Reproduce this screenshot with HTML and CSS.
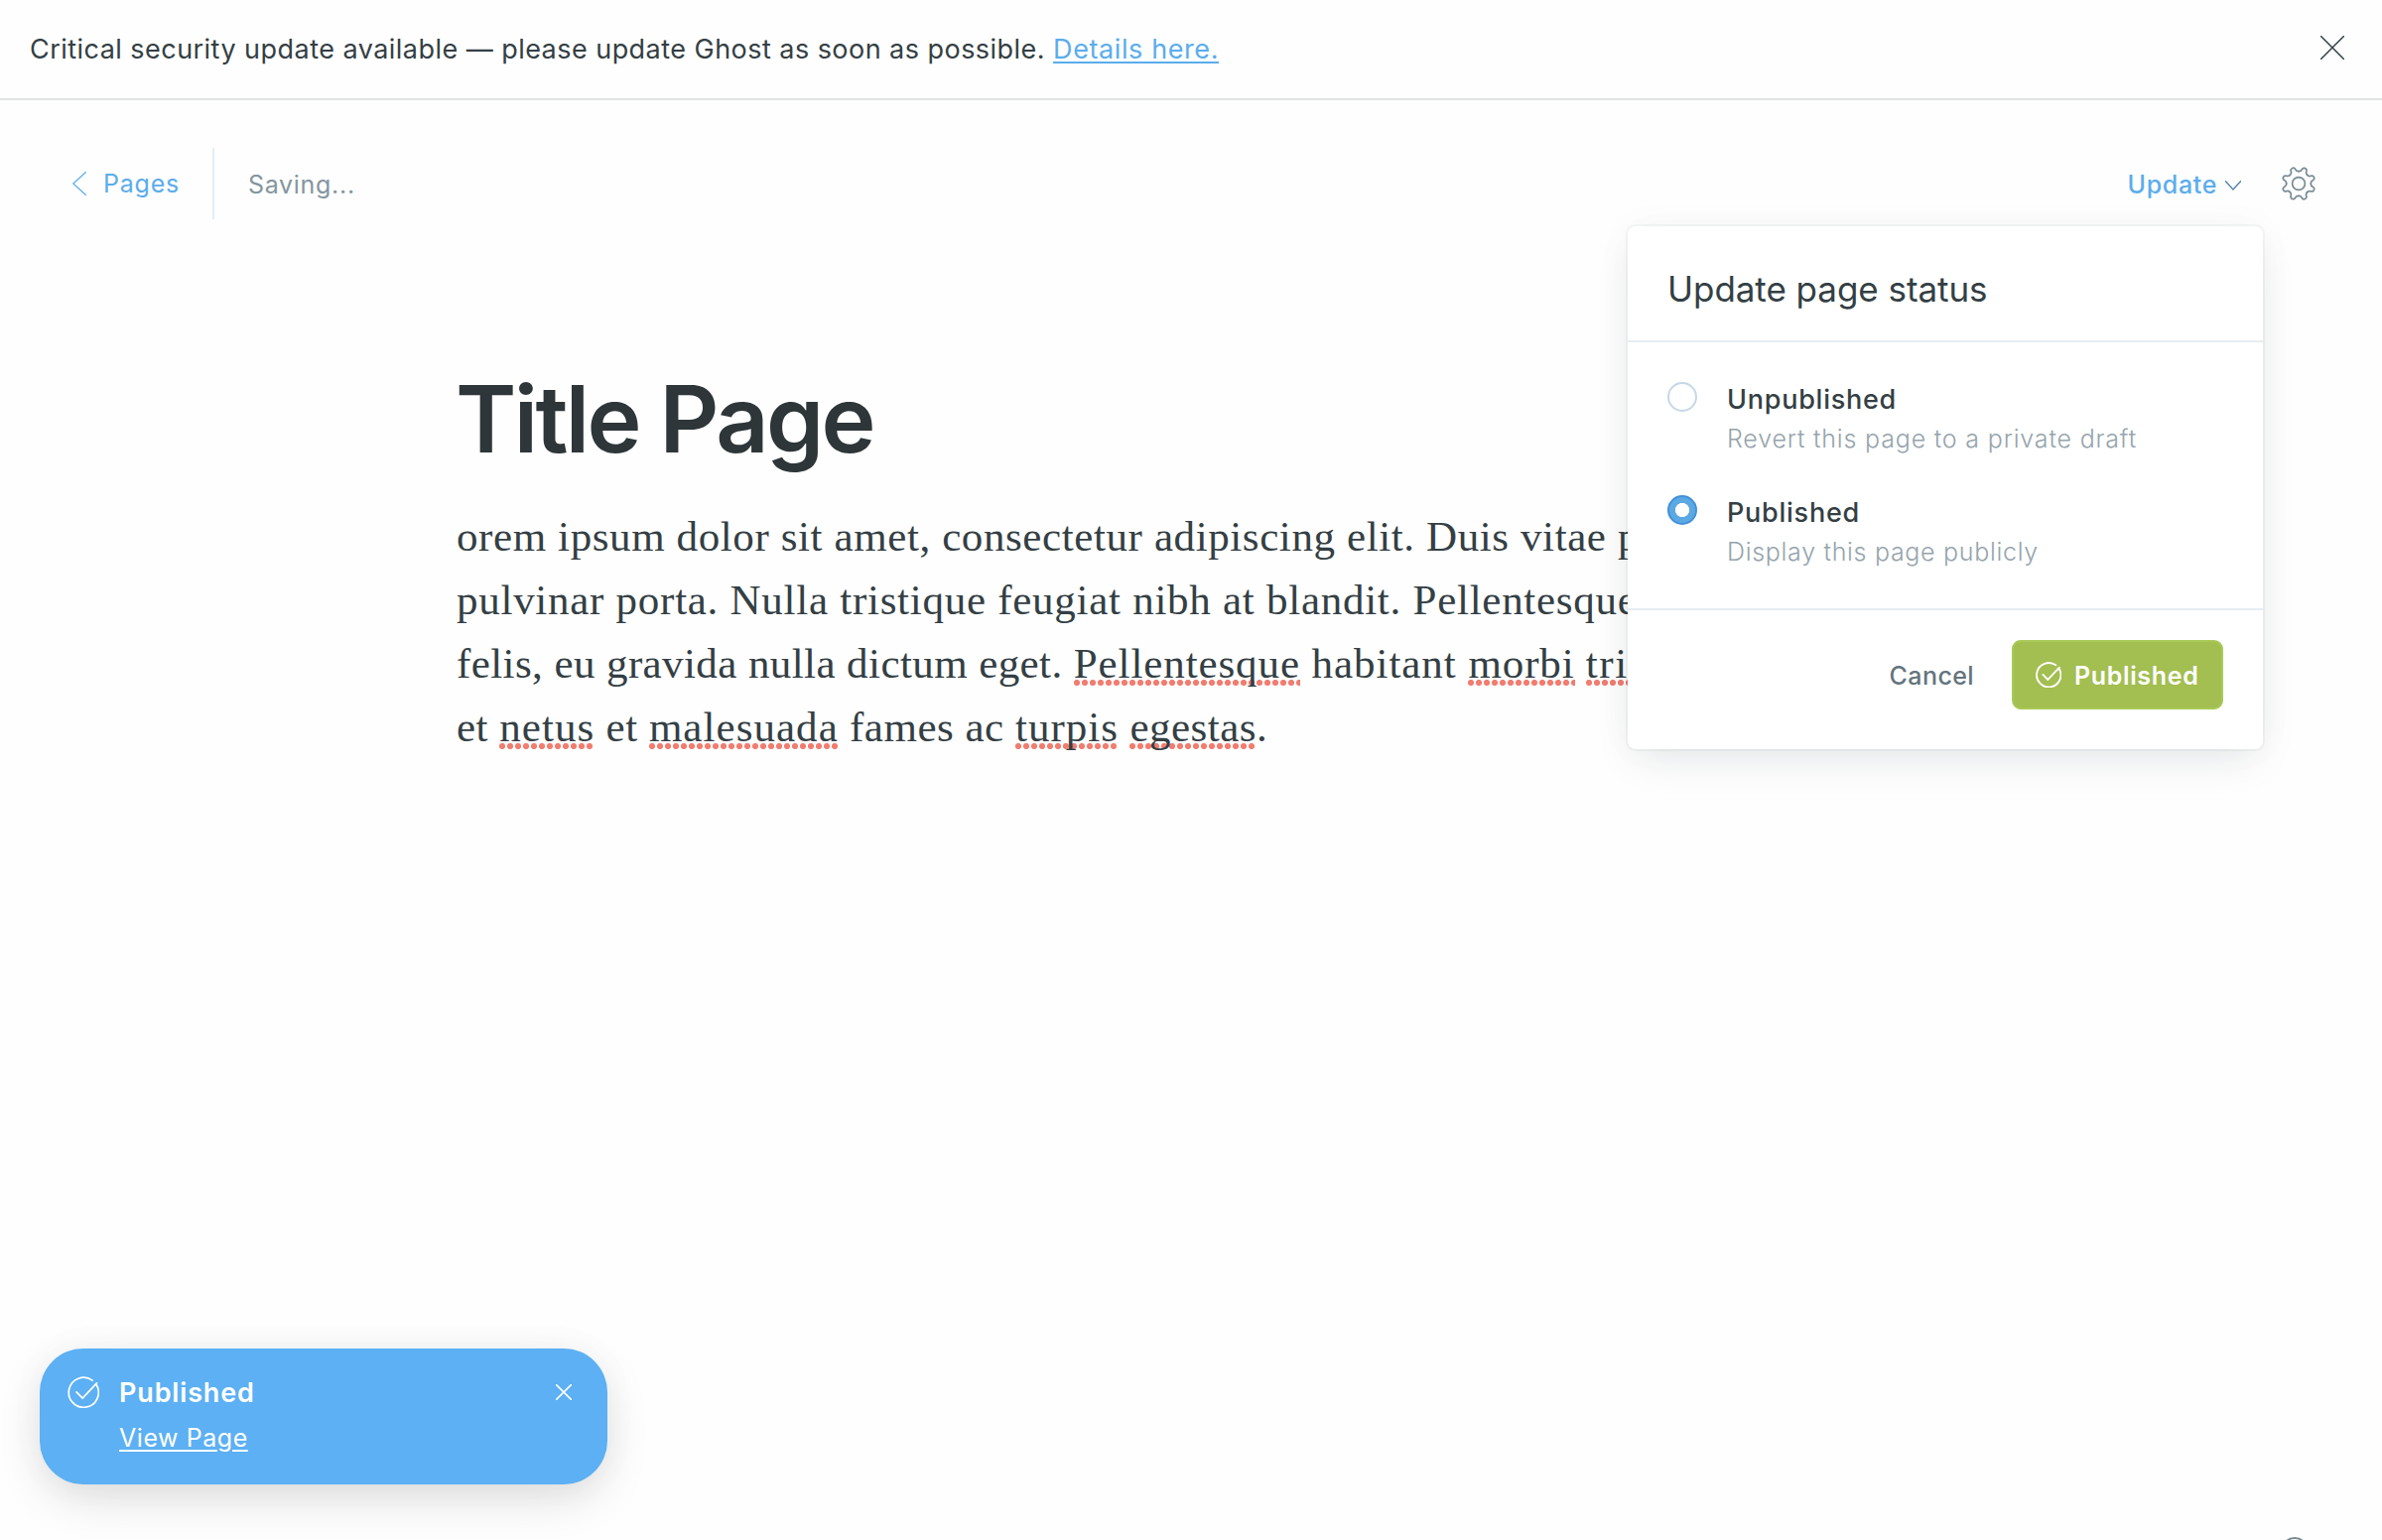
FILE: index.html
```html
<!DOCTYPE html>
<html lang="en">
<head>
<meta charset="utf-8">
<title>Title Page - Editor</title>
<link rel="stylesheet" href="styles.css">
</head>
<body>
<svg class="defs" aria-hidden="true">
  <symbol id="check-circle" viewBox="0 0 24 24">
    <path d="M6.8 11.9l4.6 4.7L22.1 5.2M21.9 6.5A11.25 11.25 0 1 1 18.8 3.1"/>
  </symbol>
  <symbol id="cross" viewBox="0 0 24 24">
    <path d="M0.5 0.5l23 23M23.5 0.5l-23 23"/>
  </symbol>
</svg>

<aside class="banner">
  <p class="banner-text"><span>Critical security update available — please update Ghost as soon as possible. </span><a class="banner-link" href="#">Details here.</a></p>
  <svg class="banner-close"><use href="#cross"/></svg>
</aside>

<header class="toolbar">
  <a class="back" href="#">
    <svg class="back-arrow" viewBox="0 0 14 24"><path d="M13.5 0.5L0.8 12l12.7 11.5"/></svg>
    <span>Pages</span>
  </a>
  <span class="status">Saving...</span>
  <div class="actions">
    <button class="update">
      <span>Update</span>
      <svg class="update-arrow" viewBox="0 0 16 10"><path d="M0.3 0.5L8 9 15.7 0.5"/></svg>
    </button>
    <svg class="gear" viewBox="-17 -17 34 34">
      <g id="tooth"><path d="M0-12.3C1.6-12.3 2.6-12.6 3.3-14.2 3.9-15.5 5.2-16 6.6-15.4 8-14.8 8.2-13.7 7.8-12.3 7.3-10.7 7.6-9.8 8.7-8.7"/></g>
      <use href="#tooth" transform="rotate(45)"/>
      <use href="#tooth" transform="rotate(90)"/>
      <use href="#tooth" transform="rotate(135)"/>
      <use href="#tooth" transform="rotate(180)"/>
      <use href="#tooth" transform="rotate(225)"/>
      <use href="#tooth" transform="rotate(270)"/>
      <use href="#tooth" transform="rotate(315)"/>
      <circle r="6.4"/>
    </svg>
  </div>
</header>

<main class="editor">
  <h1 class="title">Title Page</h1>
  <div class="content">
    <div class="line line-a">orem ipsum dolor sit amet, consectetur adipiscing elit. Duis vitae porta</div>
    <div class="line line-b">pulvinar porta. Nulla tristique feugiat nibh at blandit. Pellentesque</div>
    <div class="line line-c">felis, eu gravida nulla dictum eget. <span class="spell">Pellentesque</span><span class="wide"> habitant </span><span class="spell">morbi</span> <span class="spell loose">tristique</span></div>
    <div class="line line-d">et <span class="spell">netus</span> et <span class="spell">malesuada</span> fames ac <span class="spell">turpis</span> <span class="spell tight">egestas</span>.</div>
  </div>
</main>

<section class="menu">
  <h2 class="menu-title">Update page status</h2>
  <div class="options">
    <label class="option">
      <span class="radio"></span>
      <span class="option-text"><span class="option-name">Unpublished</span><span class="option-note">Revert this page to a private draft</span></span>
    </label>
    <label class="option">
      <span class="radio radio-on"></span>
      <span class="option-text"><span class="option-name">Published</span><span class="option-note note-b">Display this page publicly</span></span>
    </label>
  </div>
  <footer class="menu-footer">
    <button class="cancel">Cancel</button>
    <button class="confirm"><svg class="confirm-icon"><use href="#check-circle"/></svg><span>Published</span></button>
  </footer>
</section>

<aside class="toast">
  <svg class="toast-icon"><use href="#check-circle"/></svg>
  <div class="toast-text">
    <strong class="toast-title">Published</strong>
    <a class="toast-link" href="#">View Page</a>
  </div>
  <svg class="toast-close"><use href="#cross"/></svg>
</aside>

<span class="help"></span>
</body>
</html>
```
FILE: styles.css
```css
* { box-sizing: border-box; }

body {
  position: relative;
  height: 1552px;
  margin: 0;
  overflow: hidden;
  background: #fefefe;
  color: #343f44;
  font-family: Inter, "Liberation Sans", sans-serif;
  font-size: 25px;
}

h1, h2, p { margin: 0; font-weight: 400; }
button { padding: 0; border: 0; background: none; font: inherit; }
a { text-decoration: none; }
svg { display: block; flex: none; fill: none; stroke: currentColor; stroke-linecap: round; stroke-linejoin: round; }
.defs { position: absolute; width: 0; height: 0; }

/* Banner */
.banner {
  display: flex;
  align-items: center;
  justify-content: space-between;
  height: 101px;
  padding: 0 38px 0 30px;
  border-bottom: 2px solid #e1e3e3;
}
.banner-text { font-size: 27px; line-height: 40px; letter-spacing: 0.46px; white-space: pre; }
.banner-link {
  color: #5badec;
  letter-spacing: 0.6px;
  text-decoration: underline;
  text-decoration-thickness: 2px;
  text-underline-offset: 3px;
}
.banner-close { width: 24px; height: 24px; margin-bottom: 3px; stroke-width: 1.5; }

/* Toolbar */
.toolbar { display: flex; align-items: center; height: 168px; padding: 0 67px 0 73px; }
.back {
  display: flex;
  align-items: center;
  gap: 17px;
  width: 143px;
  height: 72px;
  border-right: 2px solid #e4edf4;
  color: #5badec;
  letter-spacing: 0.8px;
}
.back-arrow { width: 14px; height: 24px; stroke-width: 1.2; }
.status { padding: 2px 0 0 34px; color: #8496a0; letter-spacing: 0.7px; }
.actions { display: flex; align-items: center; gap: 41px; margin-left: auto; }
.update { display: flex; align-items: center; gap: 8px; padding-top: 2px; color: #5badec; letter-spacing: 0.65px; font-weight: 450; }
.update-arrow { width: 16px; height: 10px; margin-top: 1px; color: #5482a8; stroke-width: 1.3; }
.gear { width: 34px; height: 34px; color: #788b95; stroke-width: 1.7; }

/* Editor */
.editor { padding: 98px 0 0 459px; }
.title { height: 110px; color: #2e3639; font-size: 93px; font-weight: 600; line-height: 110px; letter-spacing: -2.65px; }
.content { margin-top: 32px; padding-left: 1px; font-family: "Liberation Serif", serif; font-size: 43px; line-height: 64px; }
.line { height: 64px; white-space: nowrap; }
.line-a { letter-spacing: 0.6px; }
.line-b { letter-spacing: 0.73px; }
.line-c { letter-spacing: 0.41px; }
.line-d { letter-spacing: 0.5px; }
.wide { letter-spacing: 0.95px; }
.spell {
  background: radial-gradient(circle at 3px 3px, #f27c6f 2.7px, rgba(242, 124, 111, 0) 3.4px) left bottom / 8px 7px repeat-x;
  letter-spacing: 0.9px;
}
.loose { letter-spacing: 1.6px; }
.line-d .spell { letter-spacing: 1.05px; }
.line-d .tight { letter-spacing: 0.5px; }

/* Publish menu */
.menu {
  position: absolute;
  top: 228px;
  left: 1640px;
  width: 640px;
  height: 527px;
  border-radius: 8px;
  background: #fff;
  box-shadow: 0 0 0 2px rgba(20, 40, 50, 0.04), 0 16px 40px -8px rgba(20, 40, 50, 0.1), 0 0 40px rgba(20, 40, 50, 0.03);
}
.menu-title { height: 117px; padding: 12px 40px 0; border-bottom: 2px solid #e6edf2; font-size: 35px; line-height: 103px; letter-spacing: -0.05px; }
.options { display: flex; flex-direction: column; gap: 34px; height: 270px; padding: 37px 40px 0; border-bottom: 2px solid #e6edf2; }
.option { display: flex; gap: 30px; }
.radio { width: 30px; height: 30px; margin-top: 3px; border: 2px solid #c5d7e6; border-radius: 50%; }
.radio-on { border: 2px solid #4390d8; background: radial-gradient(circle, #fff 6.8px, #5ba9e3 7.4px); }
.option-text { display: flex; flex-direction: column; line-height: 40px; }
.option-name { height: 40px; padding-top: 1px; font-size: 27px; font-weight: 500; letter-spacing: 0.75px; }
.option-note { color: #95a4ac; font-weight: 300; letter-spacing: 0.82px; }
.note-b { letter-spacing: 0.7px; }
.menu-footer { display: flex; align-items: center; justify-content: flex-end; gap: 38px; padding: 30px 40px 0 0; }
.cancel { padding-top: 1px; color: #63747d; font-weight: 500; letter-spacing: 0.4px; }
.confirm {
  display: flex;
  align-items: center;
  gap: 13px;
  width: 213px;
  height: 70px;
  padding-left: 22px;
  border: 2px solid #a8c957;
  border-radius: 9px;
  background: #a3be51;
  color: #fff;
  font-weight: 600;
  letter-spacing: 0.65px;
}
.confirm span { padding-top: 1px; }
.confirm-icon { width: 26px; height: 26px; stroke-width: 1.7; }

/* Toast */
.toast {
  position: absolute;
  top: 1359px;
  left: 40px;
  display: flex;
  gap: 20px;
  width: 572px;
  height: 137px;
  padding: 21px 36px 0 28px;
  border-radius: 44px;
  background: #5cb0f3;
  box-shadow: 0 16px 48px -4px rgba(0, 0, 0, 0.14), 0 0 40px rgba(0, 0, 0, 0.03);
  color: #fff;
  line-height: 46px;
}
.toast-icon { width: 32px; height: 32px; margin-top: 7px; stroke-width: 1.3; }
.toast-text { display: flex; flex-direction: column; align-items: flex-start; }
.toast-title { height: 46px; padding-top: 1px; font-size: 27px; font-weight: 600; letter-spacing: 0.85px; }
.toast-link { color: #fff; letter-spacing: 0.55px; text-decoration: underline; text-decoration-thickness: 2px; text-underline-offset: 3px; }
.toast-close { width: 16px; height: 16px; margin: 15px 0 0 auto; stroke-width: 2.4; }

/* Help button, cut off by the window's lower edge */
.help { position: absolute; top: 1549px; left: 2298px; width: 28px; height: 28px; border: 2px solid #788b95; border-radius: 50%; }
```
